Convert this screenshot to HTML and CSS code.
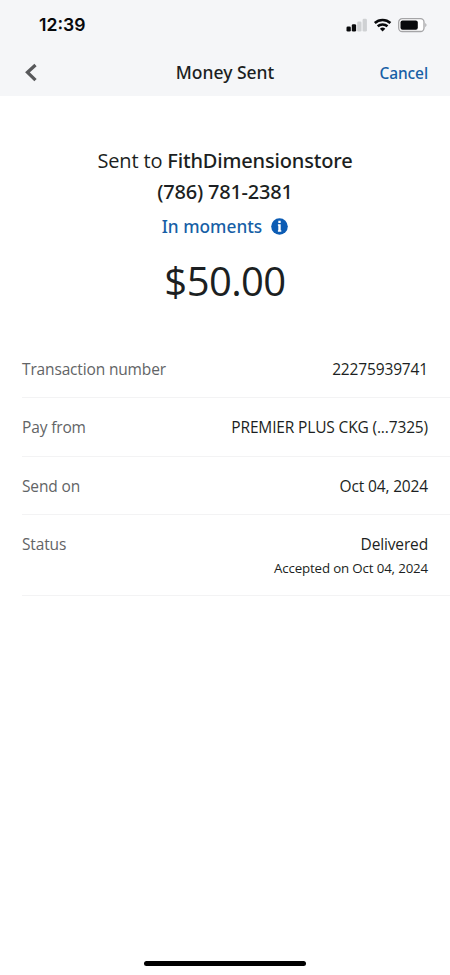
FILE: index.html
```html
<!DOCTYPE html>
<html lang="en">
<head>
<meta charset="utf-8">
<title>Money Sent</title>
<link rel="stylesheet" href="styles.css">
</head>
<body>
<main class="screen">
  <div class="top">
    <div class="status-bar">
      <span class="clock">12:39</span>
      <svg class="system" width="82" height="16" viewBox="0 0 82 16">
        <g fill="#08090b">
          <rect x="0.500" y="9.500" width="4.300" height="5" rx="1.300"/>
          <rect x="5.800" y="7.300" width="4.300" height="7.200" rx="1.300"/>
        </g>
        <g fill="#cfd1d3">
          <rect x="11.200" y="4.500" width="4.300" height="10" rx="1.300"/>
          <rect x="16.600" y="1.800" width="4.300" height="12.700" rx="1.300"/>
        </g>
        <g fill="none" stroke="#08090b" stroke-width="2.500">
          <path d="M28.800 6a11.300 11.300 0 0 1 15.600 0"/>
          <path d="M31.700 9.300a7.300 7.300 0 0 1 9.800 0"/>
        </g>
        <path fill="#08090b" d="M33.900 11.800a4 4 0 0 1 5.400 0l-2.700 2.700z"/>
        <rect x="52.700" y="1.700" width="25.300" height="12.800" rx="3.500" fill="#fff" stroke="#a5a5a7" stroke-width="1.300"/>
        <rect x="54.500" y="3.500" width="17.300" height="9.200" rx="2" fill="#08090b"/>
        <path fill="#a5a5a7" d="M79.300 6q2.400 2 0 4.200z"/>
      </svg>
    </div>
    <header class="nav">
      <svg class="back" width="12" height="20" viewBox="0 0 12 20"><path d="M10.500 2 2.500 9.300l8 7.900" fill="none" stroke="#58595b" stroke-width="3.300"/></svg>
      <h1 class="title">Money Sent</h1>
      <a class="cancel">Cancel</a>
    </header>
  </div>
  <section class="summary">
    <p class="recipient">Sent to <b>FithDimensionstore</b></p>
    <p class="phone">(786) 781-2381</p>
    <p class="timing"><span class="timing-text">In moments</span>
      <svg width="17" height="17" viewBox="0 0 17 17"><circle cx="8.500" cy="8.500" r="8.300" fill="#0c5cb4"/><path fill="#fff" d="M7.300 2.800h2.400v2.300H7.300zM6.900 6.300h2.800v6h.6v1.500H6.900v-1.500h.4V7.700h-.4z"/></svg>
    </p>
    <p class="amount">$50.00</p>
  </section>
  <dl class="details">
    <div class="row"><dt>Transaction number</dt><dd>22275939741</dd></div>
    <div class="row"><dt>Pay from</dt><dd>PREMIER PLUS CKG (...7325)</dd></div>
    <div class="row"><dt>Send on</dt><dd>Oct 04, 2024</dd></div>
    <div class="row row-status"><dt>Status</dt><dd>Delivered<small>Accepted on Oct 04, 2024</small></dd></div>
  </dl>
  <div class="home"></div>
</main>
</body>
</html>
```
FILE: styles.css
```css
* { box-sizing: border-box; }
body, h1, p, dl, dd { margin: 0; }
body { font-family: "Open Sans", sans-serif; background: #fff; color: #1c1f22; }
.screen { width: 450px; height: 975px; display: flex; flex-direction: column; overflow: hidden; }
.top { height: 96px; background: #f5f6f8; }
.status-bar { height: 49px; padding: 0 22px 0 39px; display: flex; justify-content: space-between; align-items: center; }
.clock { font: 600 17.600px/20px Inter, sans-serif; color: #08090b; }
.nav { height: 47px; padding: 0 22px 0 25px; display: grid; grid-template-columns: 60px 1fr 63px; align-items: center; }
.title, .cancel, .recipient b, .phone, .timing { font-family: "Noto Sans", "Open Sans", sans-serif; font-weight: 500; }
.title { font-size: 17.500px; line-height: 22px; padding-bottom: 1px; text-align: center; }
.cancel { color: #175fa6; font-size: 15.500px; line-height: 22px; letter-spacing: -0.100px; text-align: right; }
.summary { display: flex; flex-direction: column; align-items: center; padding-top: 49px; height: 243.600px; white-space: nowrap; }
.recipient, .phone { font-size: 20px; line-height: 31px; letter-spacing: -0.160px; }
.phone { letter-spacing: -0.220px; }
.timing { display: flex; align-items: center; gap: 9px; height: 38px; color: #175fa6; font-size: 17.300px; }
.amount { font-size: 40px; line-height: 54px; margin-top: 9px; letter-spacing: -0.600px; }
.details { padding-left: 22px; }
.row { height: 58.500px; padding: 18.400px 22px 0 0; display: flex; justify-content: space-between; border-bottom: 1px solid #f3f3f4; font-size: 15.500px; line-height: 22px; letter-spacing: -0.150px; }
.row-status { height: 81px; padding-top: 17.700px; }
dt { color: #626466; }
dd { text-align: right; white-space: nowrap; }
small { display: block; font-size: 13.300px; line-height: 26px; }
.home { width: 162px; height: 5px; border-radius: 3px; background: #000; margin: auto auto 9px; }
```
